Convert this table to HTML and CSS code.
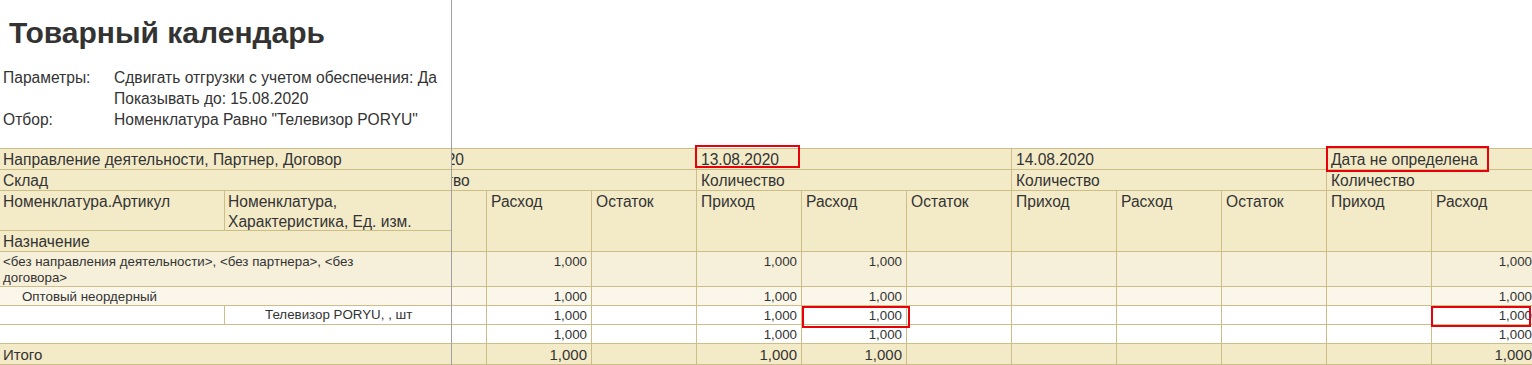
FILE: index.html
```html
<!DOCTYPE html>
<html lang="ru">
<head>
<meta charset="utf-8">
<title>Товарный календарь</title>
<link rel="stylesheet" href="styles.css">
</head>
<body>
<div class="sheet">
  <div class="frozen">
    <div class="top">
      <h1 class="title">Товарный календарь</h1>
      <div class="params">
        <div class="pl">Параметры:</div><div>Сдвигать отгрузки с учетом обеспечения: Да</div>
        <div class="pl"></div><div>Показывать до: 15.08.2020</div>
        <div class="pl">Отбор:</div><div>Номенклатура Равно "Телевизор PORYU"</div>
      </div>
    </div>
    <div class="rows">
      <div class="row hdr h21"><div class="c">Направление деятельности, Партнер, Договор</div></div>
      <div class="row hdr h21"><div class="c">Склад</div></div>
      <div class="row hdr h40"><div class="c ca">Номенклатура.Артикул</div><div class="c cb">Номенклатура,<br>Характеристика, Ед. изм.</div></div>
      <div class="row hdr h21"><div class="c">Назначение</div></div>
      <div class="row lv1 h35"><div class="c small wrap">&lt;без направления деятельности&gt;, &lt;без партнера&gt;, &lt;без<br>договора&gt;</div></div>
      <div class="row lv2 h19"><div class="c small ind1">Оптовый неордерный</div></div>
      <div class="row lv3 h19"><div class="c small ca"></div><div class="c small cb ind2">Телевизор PORYU, , шт</div></div>
      <div class="row lv3 h19"><div class="c small"></div></div>
      <div class="row total h21"><div class="c">Итого</div></div>
    </div>
  </div>
  <div class="scroll">
    <div class="rtop"></div>
    <div class="grid">
      <div class="g hdr s3">12.08.2020</div>
      <div class="g hdr s3">13.08.2020</div>
      <div class="g hdr s3">14.08.2020</div>
      <div class="g hdr s3">Дата не определена</div>

      <div class="g hdr s3">Количество</div>
      <div class="g hdr s3">Количество</div>
      <div class="g hdr s3">Количество</div>
      <div class="g hdr s3">Количество</div>

      <div class="g hdr"></div><div class="g hdr">Расход</div><div class="g hdr">Остаток</div>
      <div class="g hdr">Приход</div><div class="g hdr">Расход</div><div class="g hdr">Остаток</div>
      <div class="g hdr">Приход</div><div class="g hdr">Расход</div><div class="g hdr">Остаток</div>
      <div class="g hdr">Приход</div><div class="g hdr">Расход</div><div class="g hdr"></div>

      <div class="g lv1 n"></div><div class="g lv1 n">1,000</div><div class="g lv1 n"></div>
      <div class="g lv1 n">1,000</div><div class="g lv1 n">1,000</div><div class="g lv1 n"></div>
      <div class="g lv1 n"></div><div class="g lv1 n"></div><div class="g lv1 n"></div>
      <div class="g lv1 n"></div><div class="g lv1 n">1,000</div><div class="g lv1 n"></div>

      <div class="g lv2 n"></div><div class="g lv2 n">1,000</div><div class="g lv2 n"></div>
      <div class="g lv2 n">1,000</div><div class="g lv2 n">1,000</div><div class="g lv2 n"></div>
      <div class="g lv2 n"></div><div class="g lv2 n"></div><div class="g lv2 n"></div>
      <div class="g lv2 n"></div><div class="g lv2 n">1,000</div><div class="g lv2 n"></div>

      <div class="g lv3 n"></div><div class="g lv3 n">1,000</div><div class="g lv3 n"></div>
      <div class="g lv3 n">1,000</div><div class="g lv3 n">1,000</div><div class="g lv3 n"></div>
      <div class="g lv3 n"></div><div class="g lv3 n"></div><div class="g lv3 n"></div>
      <div class="g lv3 n"></div><div class="g lv3 n">1,000</div><div class="g lv3 n"></div>

      <div class="g lv3 n"></div><div class="g lv3 n">1,000</div><div class="g lv3 n"></div>
      <div class="g lv3 n">1,000</div><div class="g lv3 n">1,000</div><div class="g lv3 n"></div>
      <div class="g lv3 n"></div><div class="g lv3 n"></div><div class="g lv3 n"></div>
      <div class="g lv3 n"></div><div class="g lv3 n">1,000</div><div class="g lv3 n"></div>

      <div class="g total n"></div><div class="g total n">1,000</div><div class="g total n"></div>
      <div class="g total n">1,000</div><div class="g total n">1,000</div><div class="g total n"></div>
      <div class="g total n"></div><div class="g total n"></div><div class="g total n"></div>
      <div class="g total n"></div><div class="g total n">1,000</div><div class="g total n"></div>
    </div>
  </div>
  <div class="mark m1"></div>
  <div class="mark m2"></div>
  <div class="mark m3"></div>
  <div class="mark m4"></div>
</div>
</body>
</html>
```
FILE: styles.css
```css
* { box-sizing: border-box; }
html, body { margin: 0; padding: 0; background: #fff; }
body {
  font-family: "Liberation Sans", Arial, sans-serif;
  color: #333;
}
.sheet {
  position: relative;
  display: flex;
  width: 1532px;
  height: 365px;
  overflow: hidden;
}
.frozen {
  flex: none;
  width: 452px;
  border-right: 1px solid #a0a0a0;
}
.top {
  height: 148px;
  padding-top: 15px;
}
.title {
  margin: 0 0 0 9px;
  font-size: 30px;
  font-weight: bold;
  line-height: 35px;
}
.params {
  display: grid;
  grid-template-columns: 111px auto;
  margin-top: 17px;
  padding-left: 3px;
  font-size: 15.6px;
  line-height: 21px;
}
.rows { border-top: 1px solid #cdbd86; }
.row {
  display: flex;
  border-bottom: 1px solid #cdbd86;
}
.h21 { height: 21px; }
.h40 { height: 40px; }
.h35 { height: 35px; }
.h19 { height: 19px; }
.c {
  flex: 1;
  padding: 2px 3px 0;
  font-size: 15.6px;
  line-height: 18px;
  white-space: nowrap;
}
.c.ca { flex: none; width: 225px; border-right: 1px solid #cdbd86; }
.c.cb { flex: 1; line-height: 20px; padding-top: 1px; }
.c.small { font-size: 13.33px; line-height: 15.5px; }
.c.ind1 { padding-left: 22px; }
.c.ind2 { padding-left: 40px; }
.total .c { font-size: 15px; }

.hdr { background: #f3ebc8; }
.lv1 { background: #f6f0da; }
.lv2 { background: #faf7ea; }
.lv3 { background: #fff; }
.total { background: #f3ebc8; }

.scroll {
  flex: 1;
  min-width: 0;
  overflow: hidden;
}
.rtop { height: 148px; }
.grid {
  display: grid;
  width: 1260px;
  margin-left: -70px;
  grid-template-columns: repeat(12, 105px);
  grid-template-rows: 21px 21px 61px 35px 19px 19px 19px 21px;
  border-top: 1px solid #cdbd86;
}
.g {
  border-right: 1px solid #cdbd86;
  border-bottom: 1px solid #cdbd86;
  padding: 2px 4px 0;
  font-size: 15.6px;
  line-height: 18px;
  white-space: nowrap;
  overflow: hidden;
}
.g.s3 { grid-column: span 3; }
.g.n {
  text-align: right;
  font-size: 13.33px;
  line-height: 15.5px;
}
.g.total.n { font-size: 15px; line-height: 18px; }

.mark {
  position: absolute;
  border: 2px solid #e8000b;
}
.m1 { left: 695px; top: 145px; width: 105px; height: 23px; }
.m2 { left: 1326px; top: 146px; width: 163px; height: 26px; }
.m3 { left: 802px; top: 306px; width: 108px; height: 22px; }
.m4 { left: 1431px; top: 306px; width: 100px; height: 21px; }
```
